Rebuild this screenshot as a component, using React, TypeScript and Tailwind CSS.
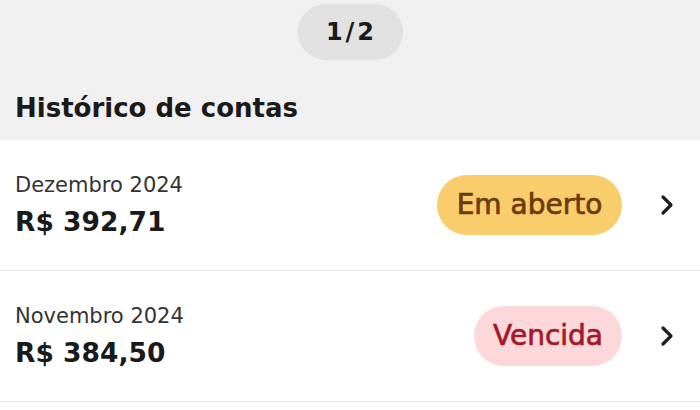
import { ChevronRight } from "lucide-react";

type Conta = {
  mes: string;
  valor: string;
  status: "aberto" | "vencida";
};

const contas: Conta[] = [
  { mes: "Dezembro 2024", valor: "R$ 392,71", status: "aberto" },
  { mes: "Novembro 2024", valor: "R$ 384,50", status: "vencida" },
];

// medium weight badge text: DejaVu has no 500, so thicken the regular a little
const StatusBadge = ({ status }: { status: Conta["status"] }) => {
  if (status === "aberto") {
    return (
      <span className="flex h-[60px] w-[185px] items-center justify-center rounded-full bg-[#f9cd6b] text-[28px] text-[#6b3b0c] [-webkit-text-stroke:0.7px_currentColor]">
        Em aberto
      </span>
    );
  }
  return (
    <span className="flex h-[60px] w-[148px] items-center justify-center rounded-full bg-[#fdd8da] text-[28px] text-[#a3182b] [-webkit-text-stroke:0.7px_currentColor]">
      Vencida
    </span>
  );
};

const ContaRow = ({ conta }: { conta: Conta }) => {
  return (
    <div className="flex h-[131px] items-center border-b border-[#e6e6e6] pl-[15px] pr-[17px]">
      <div className="flex flex-col gap-[9px]">
        <span className="text-[21px] leading-[24px] text-[#333]">{conta.mes}</span>
        <span className="text-[26.5px] font-bold leading-[32px] text-[#1a1a1a]">
          {conta.valor}
        </span>
      </div>
      <div className="ml-auto flex items-center gap-[29px]">
        <StatusBadge status={conta.status} />
        <ChevronRight size={32} strokeWidth={2.4} className="text-[#1f1f1f]" />
      </div>
    </div>
  );
};

export default function App() {
  return (
    <div className="flex h-[410px] w-[700px] flex-col overflow-hidden bg-[#f0f0f0] font-['DejaVu_Sans',sans-serif] text-[#1a1a1a]">
      <div className="flex flex-col pb-[16px] pt-[4px]">
        <div className="flex justify-center">
          <div className="flex h-[56px] w-[105px] items-center justify-center rounded-full bg-[#e1e1e1] pl-[3px] text-[24px] font-bold tracking-[3px]">
            1/2
          </div>
        </div>
        <h2 className="mt-[32px] px-[15px] text-[26px] font-bold leading-[32px]">
          Histórico de contas
        </h2>
      </div>
      <div className="flex-1 bg-white">
        {contas.map((conta) => (
          <ContaRow key={conta.mes} conta={conta} />
        ))}
      </div>
    </div>
  );
}
